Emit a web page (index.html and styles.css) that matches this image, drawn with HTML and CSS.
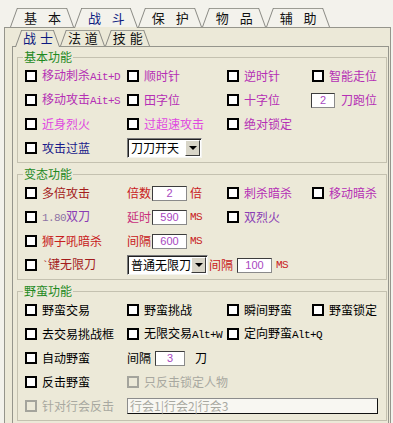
FILE: index.html
```html
<!DOCTYPE html>
<html lang="zh">
<head>
<meta charset="utf-8">
<title>战斗设置</title>
<link rel="stylesheet" href="styles.css">
</head>
<body>
<div class="win">
  <div class="tabs tabs-outer">
    <div class="tab">基 本</div>
    <div class="tab active">战 斗</div>
    <div class="tab">保 护</div>
    <div class="tab">物 品</div>
    <div class="tab">辅 助</div>
  </div>
  <div class="panel panel-outer">
    <div class="tabs tabs-inner">
      <div class="tab active">战 士</div>
      <div class="tab">法 道</div>
      <div class="tab">技 能</div>
    </div>
    <div class="panel panel-inner">
      <fieldset class="group">
        <legend>基本功能</legend>
        <div class="grid">
          <label class="cb c-mag"><span class="box"></span><span class="t">移动刺杀<span class="m">Ait+D</span></span></label>
          <label class="cb c-mag"><span class="box"></span><span class="t">顺时针</span></label>
          <label class="cb c-mag"><span class="box"></span><span class="t">逆时针</span></label>
          <label class="cb c-mag"><span class="box"></span><span class="t">智能走位</span></label>

          <label class="cb c-mag"><span class="box"></span><span class="t">移动攻击<span class="m">Ait+S</span></span></label>
          <label class="cb c-mag"><span class="box"></span><span class="t">田字位</span></label>
          <label class="cb c-mag"><span class="box"></span><span class="t">十字位</span></label>
          <div class="f shift-l"><span class="num w24">2</span><span class="c-mag ml6">刀跑位</span></div>

          <label class="cb c-lmag"><span class="box"></span><span class="t">近身烈火</span></label>
          <label class="cb c-lmag"><span class="box"></span><span class="t">过超速攻击</span></label>
          <label class="cb c-mag"><span class="box"></span><span class="t">绝对锁定</span></label>
          <span></span>

          <label class="cb c-navy"><span class="box"></span><span class="t">攻击过蓝</span></label>
          <div class="f span3"><div class="combo w75"><span class="v">刀刀开天</span><span class="btn"><span class="arrow"></span></span></div></div>
        </div>
      </fieldset>

      <fieldset class="group">
        <legend>变态功能</legend>
        <div class="grid">
          <label class="cb c-dred"><span class="box"></span><span class="t">多倍攻击</span></label>
          <div class="f"><span class="c-red">倍数</span><span class="num w35 ml1">2</span><span class="c-red ml3">倍</span></div>
          <label class="cb c-mag"><span class="box"></span><span class="t">刺杀暗杀</span></label>
          <label class="cb c-mag"><span class="box"></span><span class="t">移动暗杀</span></label>

          <label class="cb c-purp"><span class="box"></span><span class="t"><span class="m c-gp">1.80</span>双刀</span></label>
          <div class="f"><span class="c-pink">延时</span><span class="num w35 ml1">590</span><span class="m c-red ml3">MS</span></div>
          <label class="cb c-purp"><span class="box"></span><span class="t">双烈火</span></label>
          <span></span>

          <label class="cb c-red"><span class="box"></span><span class="t">狮子吼暗杀</span></label>
          <div class="f"><span class="c-red">间隔</span><span class="num w35 ml1">600</span><span class="m c-red ml3">MS</span></div>
          <span></span>
          <span></span>

          <label class="cb c-dred"><span class="box"></span><span class="t"><span class="m">`</span>键无限刀</span></label>
          <div class="f span3"><div class="combo w81"><span class="v">普通无限刀</span><span class="btn"><span class="arrow"></span></span></div><span class="c-red ml1">间隔</span><span class="num w35 ml4">100</span><span class="m c-red ml4">MS</span></div>
        </div>
      </fieldset>

      <fieldset class="group">
        <legend>野蛮功能</legend>
        <div class="grid">
          <label class="cb"><span class="box"></span><span class="t">野蛮交易</span></label>
          <label class="cb"><span class="box"></span><span class="t">野蛮挑战</span></label>
          <label class="cb"><span class="box"></span><span class="t">瞬间野蛮</span></label>
          <label class="cb"><span class="box"></span><span class="t">野蛮锁定</span></label>

          <label class="cb"><span class="box"></span><span class="t">去交易挑战框</span></label>
          <label class="cb"><span class="box"></span><span class="t">无限交易<span class="m">Alt+W</span></span></label>
          <label class="cb span2"><span class="box"></span><span class="t">定向野蛮<span class="m">Alt+Q</span></span></label>

          <label class="cb"><span class="box"></span><span class="t">自动野蛮</span></label>
          <div class="f span3"><span>间隔</span><span class="num w30 ml4">3</span><span class="ml10">刀</span></div>

          <label class="cb"><span class="box"></span><span class="t">反击野蛮</span></label>
          <label class="cb dis span3"><span class="box"></span><span class="t">只反击锁定人物</span></label>

          <label class="cb dis"><span class="box"></span><span class="t">针对行会反击</span></label>
          <div class="f span3"><span class="txt">行会1|行会2|行会3</span></div>
        </div>
      </fieldset>
    </div>
  </div>
</div>
</body>
</html>
```

FILE: styles.css
```css
* { box-sizing: border-box; }

html, body {
  margin: 0;
  padding: 0;
}

body {
  width: 393px;
  height: 423px;
  overflow: hidden;
  background: #f3f2ec;
  font-family: "Noto Sans CJK SC", "Noto Sans", sans-serif;
  font-size: 12px;
  color: #000;
}

.win {
  padding: 8px 2px 0 4px;
}

/* ---------- tabs ---------- */
.tabs {
  display: flex;
  align-items: flex-end;
}

.tabs-outer {
  height: 19px;
  padding-left: 6px;
}

.tabs-inner {
  height: 18px;
  padding-left: 3px;
}

.tab {
  position: relative;
  display: flex;
  align-items: center;
  white-space: nowrap;
  font-size: 13px;
  line-height: 14px;
  color: #111;
  background: linear-gradient(#9c9c94, #9c9c94) 7px 0 / calc(100% - 14px) 1px no-repeat;
}

.tabs-outer .tab {
  height: 19px;
  padding: 0 13px 0 14px;
  word-spacing: 8px;
}

.tabs-inner .tab {
  height: 16px;
  padding: 0 7px 0 8px;
  word-spacing: 1px;
  background: linear-gradient(#9c9c94, #9c9c94) 6px 0 / calc(100% - 12px) 1px no-repeat;
}

.tab::before,
.tab::after {
  content: "";
  position: absolute;
  top: 0;
  bottom: 0;
  width: 7px;
}

.tab::before {
  left: 0;
  border-left: 1px solid #8a8a84;
  transform-origin: left bottom;
  transform: skewX(-20deg);
}

.tab::after {
  right: 0;
  border-right: 1px solid #8a8a84;
  transform-origin: right bottom;
  transform: skewX(20deg);
}

.tab.active {
  z-index: 1;
  color: #0c1a80;
  margin-bottom: -1px;
}

.tabs-outer .tab.active {
  height: 20px;
  padding-bottom: 1px;
  background:
    linear-gradient(#9c9c94, #9c9c94) 7px 0 / calc(100% - 14px) 1px no-repeat,
    linear-gradient(#ece9d8, #ece9d8) 50% 100% / calc(100% - 2px) 1px no-repeat;
}

.tabs-inner .tab.active {
  height: 17px;
  padding-bottom: 1px;
  background:
    linear-gradient(#9c9c94, #9c9c94) 6px 0 / calc(100% - 12px) 1px no-repeat,
    linear-gradient(#ece9d8, #ece9d8) 50% 100% / calc(100% - 2px) 1px no-repeat;
}

/* ---------- panels ---------- */
.panel {
  background: #ece9d8;
  border: 1px solid #95958c;
  border-bottom: none;
}

.panel-outer {
  height: 396px;
  padding: 0 1px 0 7px;
}

.panel-inner {
  height: 380px;
  padding: 3px 1px 0 4px;
  display: flex;
  flex-direction: column;
  gap: 4px;
}

/* ---------- group boxes ---------- */
.group {
  margin: 0;
  min-width: 0;
  border: 1px solid #c4c1b0;
  padding: 0 4px 2px 7px;
}

.group legend {
  padding: 0 1px;
  margin-left: -2px;
  line-height: 14px;
  color: #1f8a1f;
}

.grid {
  display: grid;
  grid-template-columns: 102px 100px 85px 1fr;
  grid-auto-rows: 24px;
  align-items: center;
}

.cb {
  display: flex;
  align-items: center;
  gap: 5px;
  white-space: nowrap;
  line-height: 14px;
}

.t {
  white-space: nowrap;
}

.box {
  flex: none;
  width: 12px;
  height: 12px;
  border: 2px solid #000;
  background: #fff;
}

.cb.dis {
  color: #a8a8a0;
}

.cb.dis .box {
  border-color: #a4a49c;
  background: #ece9d8;
}

.f {
  display: flex;
  align-items: center;
  white-space: nowrap;
  line-height: 14px;
}

.span2 { grid-column: span 2; }
.span3 { grid-column: span 3; }
.shift-l { margin-left: -1px; }

.m {
  font-family: "Liberation Mono", monospace;
  font-size: 11px;
  letter-spacing: -0.6px;
}

.ml1 { margin-left: 1px; }
.ml3 { margin-left: 3px; }
.ml4 { margin-left: 4px; }
.ml6 { margin-left: 6px; }
.ml10 { margin-left: 10px; }

/* ---------- inputs ---------- */
.num {
  display: block;
  height: 15px;
  border: 1px solid;
  border-color: #3c3c3c #8a8a8a #8a8a8a #3c3c3c;
  background: #fff;
  color: #a848c0;
  font-family: "Liberation Sans", sans-serif;
  font-size: 11px;
  line-height: 13px;
  text-align: center;
}

.w24 { width: 24px; }
.w30 { width: 30px; }
.w35 { width: 35px; }

.combo {
  display: flex;
  height: 20px;
  border: 1px solid;
  border-color: #7a7a7a #f4f4f0 #f4f4f0 #7a7a7a;
  box-shadow: inset 1px 1px 0 #202020;
  background: #fff;
}

.w75 { width: 75px; }
.w81 { width: 81px; }

.combo .v {
  flex: 1;
  min-width: 0;
  padding-left: 3px;
  font-size: 12px;
  line-height: 18px;
  color: #000;
  white-space: nowrap;
}

.combo .btn {
  flex: none;
  width: 15px;
  margin: 1px 1px 1px 0;
  background: #d8d5c8;
  border: 1px solid;
  border-color: #fff #3a3a3a #3a3a3a #fff;
  display: flex;
  align-items: center;
  justify-content: center;
}

.arrow {
  width: 0;
  height: 0;
  border-top: 4px solid #000;
  border-left: 4px solid transparent;
  border-right: 4px solid transparent;
}

.txt {
  display: block;
  width: 251px;
  height: 16px;
  border: 1px solid;
  border-color: #8c8c8c #111 #111 #8c8c8c;
  background: #f8f7f2;
  color: #a8a8a0;
  padding-left: 2px;
  line-height: 14px;
}

/* ---------- text colours ---------- */
.c-mag { color: #b52fb5; }
.c-lmag { color: #e048e0; }
.c-navy { color: #1a1a8a; }
.c-red { color: #c82020; }
.c-dred { color: #a41c1c; }
.c-purp { color: #8a3cb4; }
.c-gp { color: #8e74a4; }
.c-pink { color: #c8307c; }
```
